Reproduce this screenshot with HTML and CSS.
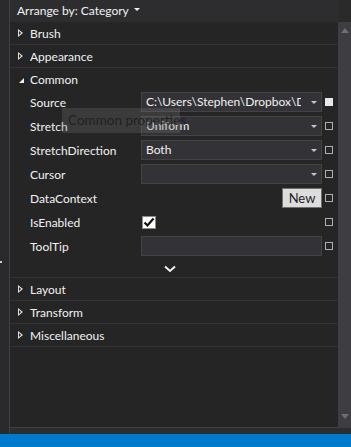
FILE: index.html
```html
<!DOCTYPE html>
<html>
<head>
<meta charset="utf-8">
<link rel="stylesheet" href="styles.css">
</head>
<body>
<div class="app">
  <div class="strip"><span class="mark"></span></div>
  <div class="panel">
    <div class="header">Arrange by: Category <span class="caret"></span></div>
    <div class="corner"></div>
    <div class="content">
      <div class="section"><span class="tri-closed"></span>Brush</div>
      <div class="section"><span class="tri-closed"></span>Appearance</div>
      <div class="section open"><span class="tri-open"></span>Common</div>
      <div class="props">
        <div class="prop">
          <div class="label">Source</div>
          <div class="editor combo"><span class="val">C:\Users\Stephen\Dropbox\Documents\image.png</span><span class="arrow"></span></div>
          <div class="sq filled"></div>
        </div>
        <div class="prop">
          <div class="label">Stretch</div>
          <div class="editor combo"><span class="val">Uniform</span><span class="arrow"></span></div>
          <div class="sq"></div>
        </div>
        <div class="prop">
          <div class="label">StretchDirection</div>
          <div class="editor combo"><span class="val">Both</span><span class="arrow"></span></div>
          <div class="sq"></div>
        </div>
        <div class="prop">
          <div class="label">Cursor</div>
          <div class="editor combo"><span class="val"></span><span class="arrow"></span></div>
          <div class="sq"></div>
        </div>
        <div class="prop">
          <div class="label">DataContext</div>
          <div class="editor plain"><button class="new">New</button></div>
          <div class="sq"></div>
        </div>
        <div class="prop">
          <div class="label">IsEnabled</div>
          <div class="editor plain"><span class="check"><svg width="12" height="11" viewBox="0 0 12 11"><path d="M1.5 5.5 L4.5 8.5 L10.5 1.5" fill="none" stroke="#111" stroke-width="2.2"/></svg></span></div>
          <div class="sq"></div>
        </div>
        <div class="prop">
          <div class="label">ToolTip</div>
          <div class="editor text"></div>
          <div class="sq"></div>
        </div>
        <div class="more"><svg width="12" height="8" viewBox="0 0 12 8"><path d="M1 1.5 L6 6 L11 1.5" fill="none" stroke="#f1f1f1" stroke-width="2"/></svg></div>
        <div class="tooltip">Common properties</div>
      </div>
      <div class="section"><span class="tri-closed"></span>Layout</div>
      <div class="section"><span class="tri-closed"></span>Transform</div>
      <div class="section"><span class="tri-closed"></span>Miscellaneous</div>
    </div>
    <div class="scrollbar">
      <span class="up"></span>
      <span class="down"></span>
    </div>
    <div class="gap"></div>
  </div>
</div>
<div class="status"></div>
</body>
</html>
```
FILE: styles.css
```css
html, body {
  margin: 0;
  padding: 0;
}
body {
  width: 351px;
  height: 447px;
  background: #2d2d30;
  font-family: Lato, "Noto Sans", sans-serif;
  font-size: 12px;
  color: #f1f1f1;
  overflow: hidden;
}
.app {
  display: grid;
  grid-template-columns: 9px 1fr;
  height: 434px;
}
.strip {
  background: #2a2a2c;
  position: relative;
}
.mark {
  position: absolute;
  left: 0;
  top: 261px;
  width: 2px;
  height: 2px;
  background: #d0d0d0;
}
.panel {
  border-left: 1px solid #3f3f46;
  display: grid;
  grid-template-columns: 1fr 13px;
  grid-template-rows: 22px 1fr 6px;
}
.header {
  background: #2d2d30;
  padding-left: 7px;
  line-height: 22px;
  white-space: nowrap;
}
.caret {
  display: inline-block;
  width: 0;
  height: 0;
  border-left: 3px solid transparent;
  border-right: 3px solid transparent;
  border-top: 3px solid #f1f1f1;
  vertical-align: 4px;
  margin-left: 2px;
}
.corner {
  background: #2a2a2b;
}
.content {
  background: #252526;
  border-bottom: 1px solid #3f3f46;
  display: flex;
  flex-direction: column;
}
.section {
  height: 21px;
  padding-top: 1px;
  line-height: 21px;
  border-bottom: 1px solid #333337;
  padding-left: 8px;
  display: flex;
  align-items: center;
}
.section.open {
  border-bottom: none;
}
.tri-closed {
  width: 6px;
  height: 9px;
  margin-right: 6px;
  position: relative;
}
.tri-closed::before {
  content: "";
  position: absolute;
  left: 0;
  top: 0;
  border-top: 4.5px solid transparent;
  border-bottom: 4.5px solid transparent;
  border-left: 5px solid #e0e0e0;
}
.tri-closed::after {
  content: "";
  position: absolute;
  left: 1px;
  top: 2px;
  border-top: 2.5px solid transparent;
  border-bottom: 2.5px solid transparent;
  border-left: 2.8px solid #252526;
}
.tri-open {
  width: 0;
  height: 0;
  border-left: 5px solid transparent;
  border-bottom: 5px solid #f1f1f1;
  margin-left: 1px;
  margin-right: 6px;
  margin-top: 1px;
}
.props {
  position: relative;
  display: flex;
  flex-direction: column;
}
.prop {
  height: 24px;
  display: grid;
  grid-template-columns: 111px 181px 8px;
  padding-left: 20px;
  align-items: center;
}
.label {
  white-space: nowrap;
}
.editor {
  height: 20px;
  box-sizing: border-box;
  display: flex;
  align-items: center;
}
.combo, .text {
  background: #333337;
  border: 1px solid #434346;
}
.combo .val {
  flex: 1;
  overflow: hidden;
  white-space: nowrap;
  padding-left: 4px;
  margin-right: 10px;
  line-height: 18px;
}
.arrow {
  width: 0;
  height: 0;
  border-left: 3px solid transparent;
  border-right: 3px solid transparent;
  border-top: 3px solid #c8c8c8;
  margin-right: 4px;
}
.plain {
  justify-content: flex-start;
}
.new {
  margin-left: auto;
  width: 40px;
  height: 20px;
  background: #dddddd;
  border: 1px solid #707070;
  color: #1e1e1e;
  font-family: inherit;
  font-size: 13px;
  padding: 0;
}
.check {
  width: 14px;
  height: 13px;
  box-sizing: border-box;
  margin-left: 1px;
  background: #ffffff;
  border: 1px solid #8a8a8a;
  display: flex;
  align-items: center;
  justify-content: center;
}
.sq {
  width: 8px;
  height: 8px;
  box-sizing: border-box;
  margin-left: 3px;
  border: 1px solid #b0b0b0;
}
.sq.filled {
  background: #e8e8e8;
  border-color: #e8e8e8;
}
.more {
  height: 17px;
  border-bottom: 1px solid #333337;
  display: flex;
  align-items: center;
  justify-content: center;
  padding-right: 8px;
  padding-top: 2px;
  box-sizing: content-box;
}
.tooltip {
  position: absolute;
  left: 52px;
  top: 18px;
  width: 118px;
  height: 25px;
  box-sizing: border-box;
  padding-left: 6px;
  line-height: 25px;
  font-size: 13.5px;
  white-space: nowrap;
  background: rgba(120, 120, 120, 0.28);
  color: rgba(25, 25, 25, 0.8);
}
.scrollbar {
  background: #3e3e42;
  display: flex;
  flex-direction: column;
  justify-content: space-between;
  align-items: center;
  padding: 6px 0 9px 1px;
}
.up {
  width: 0;
  height: 0;
  border-left: 4px solid transparent;
  border-right: 4px solid transparent;
  border-bottom: 5px solid #6e6e72;
}
.down {
  width: 0;
  height: 0;
  border-left: 4px solid transparent;
  border-right: 4px solid transparent;
  border-top: 5px solid #6e6e72;
}
.gap {
  grid-column: 1 / 3;
  background: #2d2d30;
}
.status {
  height: 13px;
  background: #007acc;
}
```
